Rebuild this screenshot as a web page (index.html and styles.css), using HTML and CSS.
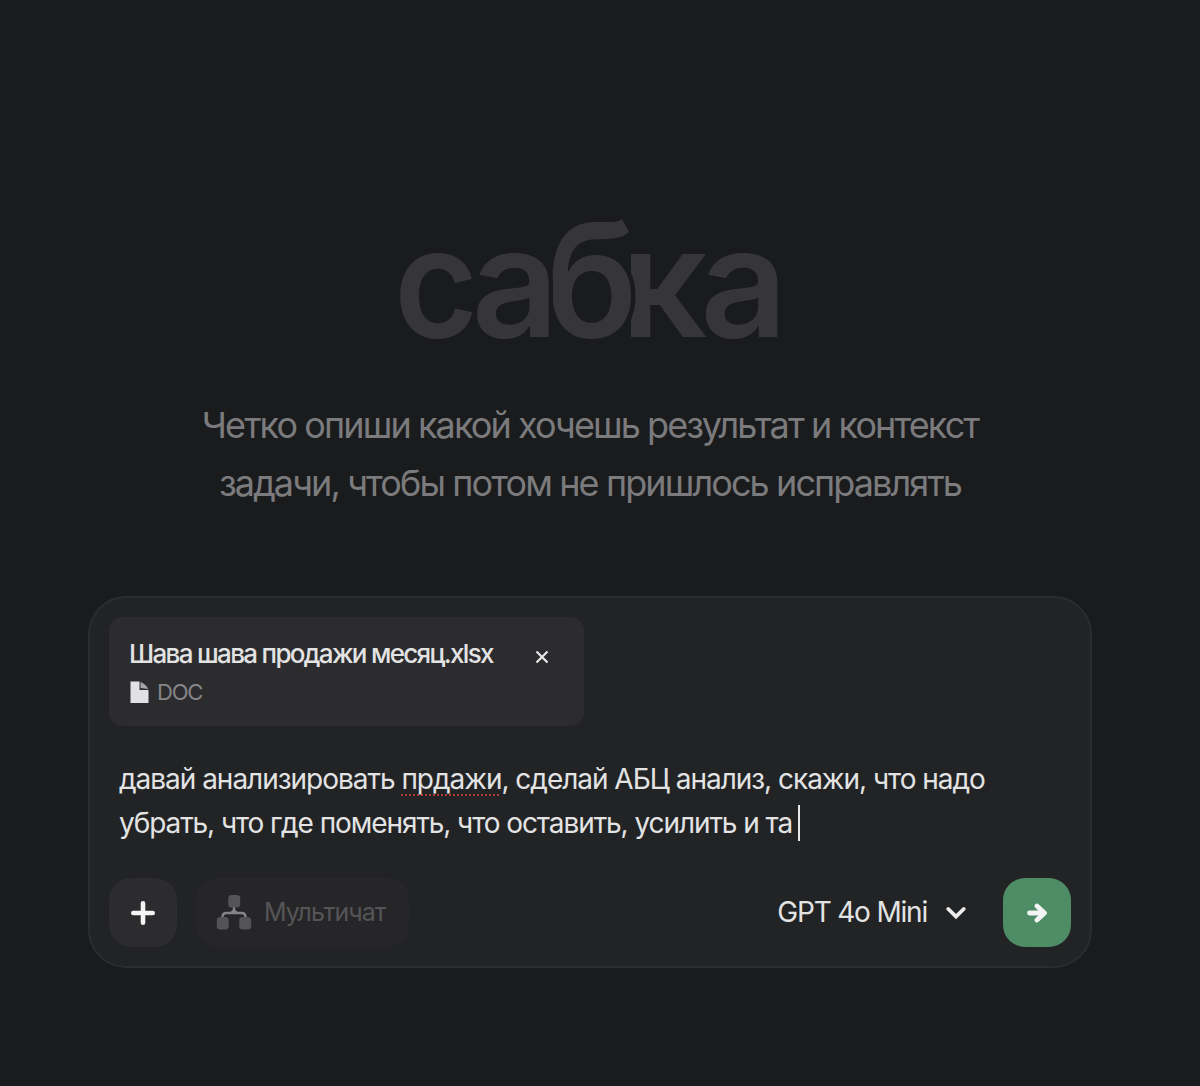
FILE: index.html
```
<!DOCTYPE html>
<html lang="ru">
<head>
    <meta charset="utf-8">
    <title>сабка</title>
    <link rel="stylesheet" href="styles.css">
</head>
<body>
    <div class="page">
        <h1 class="logo"><span class="l1">с</span><span class="l2">а</span><span class="l3">б</span><span class="l4">к</span><span class="l5">а</span></h1>
        <p class="hint">Четко опиши какой хочешь результат и контекст<br>задачи, чтобы потом не пришлось исправлять</p>
        <div class="composer">
            <div class="file">
                <div class="file-info">
                    <div class="file-name">Шава шава продажи месяц.xlsx</div>
                    <div class="file-type">
                        <svg width="20" height="23" viewBox="0 0 20 23">
                            <path d="M1.500 0.500h9v8.500h9v13h-18z" fill="#e2e2e4"/>
                            <path d="M11.500 1c3 1 6.500 4 7.800 7l-7.800-1z" fill="#a5a5a7"/>
                        </svg>
                        <span>DOC</span>
                    </div>
                </div>
                <svg class="close" width="14" height="14" viewBox="0 0 14 14">
                    <path d="M1.500 1.500l11 11M12.500 1.500l-11 11" stroke="#e8e8e9" stroke-width="2.200"/>
                </svg>
            </div>
            <div class="message">давай анализировать <span class="typo">прдажи</span>, сделай АБЦ анализ, скажи, что надо<br><span class="line">убрать, что где поменять, что оставить, усилить и та</span><i class="caret"></i></div>
            <div class="toolbar">
                <div class="btn add">
                    <svg width="26" height="26" viewBox="0 0 26 26">
                        <path d="M13 3.300v19.400M3.300 13h19.400" stroke="#f4f4f5" stroke-width="4.600" stroke-linecap="round"/>
                    </svg>
                </div>
                <div class="btn multi">
                    <svg width="36" height="36" viewBox="0 0 36 36">
                        <path d="M18 12v3.500l-3 2.500M18 15.500l3 2.500M6.500 25v-3c0-2.500 1.500-4 4-4h15c2.500 0 4 1.500 4 4v3" fill="none" stroke="#858587" stroke-width="2.400"/>
                        <rect x="12.200" y="0" width="12" height="12.500" rx="3.500" fill="#545456"/>
                        <rect x="0.800" y="22" width="12" height="12.500" rx="3.500" fill="#545456"/>
                        <rect x="23.200" y="22" width="12" height="12.500" rx="3.500" fill="#545456"/>
                    </svg>
                    <span>Мультичат</span>
                </div>
                <div class="model"><span>GPT 4o Mini</span>
                    <svg width="20" height="14" viewBox="0 0 20 14">
                        <path d="M2.300 3l7.700 7.500L17.700 3" fill="none" stroke="#ececed" stroke-width="3.800" stroke-linecap="round"/>
                    </svg>
                </div>
                <div class="btn send">
                    <svg width="22" height="20" viewBox="0 0 22 20">
                        <path d="M3.500 10h14M11 3l7.500 7-7.500 7" fill="none" stroke="#f4f4f5" stroke-width="4.800" stroke-linecap="round" stroke-linejoin="round"/>
                    </svg>
                </div>
            </div>
        </div>
    </div>
</body>
</html>
```
FILE: styles.css
```
* {
    box-sizing: border-box;
}
body {
    margin: 0;
    background: #1a1b1d;
    font-family: Inter, "Liberation Sans", sans-serif;
    color: #e3e3e4;
}
.page {
    width: 1004px;
    margin-left: 88px;
    padding-top: 185px;
}
.logo {
    display: flex;
    margin: 0;
    padding-left: 306px;
    height: 194px;
    font-size: 152px;
    line-height: 194px;
    font-weight: 600;
    color: #363638;
}
/* every letter cuts a thin gap out of the one below it */
.logo span {
    position: relative;
    -webkit-text-stroke: 9px #1a1b1d;
    paint-order: stroke fill;
}
.l1 {
    z-index: 5;
    margin-right: -11px;
    transform: scaleX(0.95);
    transform-origin: 0 0;
}
.l2 { z-index: 4; margin-right: -13px; }
.l3 {
    z-index: 3;
    margin-right: -17px;
    transform: scaleY(1.04);
    transform-origin: 0 153px;
}
.l4 { z-index: 1; margin-right: -7px; }
.l5 { z-index: 2; }
.hint {
    margin: 17px 0 0;
    font-size: 36px;
    line-height: 58px;
    text-align: center;
    color: #7b7b7d;
    letter-spacing: -1.9px;
}
.composer {
    margin-top: 84px;
    height: 372px;
    padding: 19px;
    border: 2px solid #2b2c2e;
    border-radius: 38px;
    background: #222325;
}
.file {
    display: flex;
    justify-content: space-between;
    width: 475px;
    height: 109px;
    padding: 21px 35px 0 20px;
    border-radius: 14px;
    background: #2c2c2e;
}
.file-name {
    font-size: 26px;
    line-height: 32px;
    font-weight: 500;
    letter-spacing: -1.68px;
    white-space: nowrap;
}
.file-type {
    display: flex;
    align-items: center;
    gap: 8px;
    margin-top: 7px;
    font-size: 22px;
    line-height: 30px;
    letter-spacing: -1.2px;
    color: #858588;
}
.close {
    margin-top: 12px;
}
.message {
    height: 87px;
    margin: 32px 0 0 10px;
    font-size: 28px;
    line-height: 43.5px;
    letter-spacing: -1.02px;
    white-space: nowrap;
}
.line {
    letter-spacing: -1.08px;
}
.typo {
    text-decoration: underline dotted #b03a38 2px;
    text-underline-offset: 5px;
    text-decoration-skip-ink: none;
}
.caret {
    display: inline-block;
    width: 2px;
    height: 36px;
    margin-left: 6px;
    vertical-align: -8px;
    background: #e8e8e9;
}
.toolbar {
    display: flex;
    align-items: center;
    margin-top: 33px;
}
.btn {
    display: flex;
    align-items: center;
    justify-content: center;
    height: 69px;
    border-radius: 22px;
}
.add {
    width: 68px;
    background: #2c2c2e;
}
.multi {
    justify-content: flex-start;
    width: 213px;
    margin-left: 19px;
    padding-left: 20px;
    gap: 12px;
    background: #262628;
    color: #555557;
    font-size: 25px;
    letter-spacing: -1px;
}
.model {
    display: flex;
    align-items: center;
    gap: 19px;
    margin-left: auto;
    font-size: 28px;
    letter-spacing: -1.2px;
}
.multi span,
.model span {
    padding-bottom: 2px;
}
.send {
    width: 68px;
    margin-left: 37px;
    background: #4e8c66;
}
```
